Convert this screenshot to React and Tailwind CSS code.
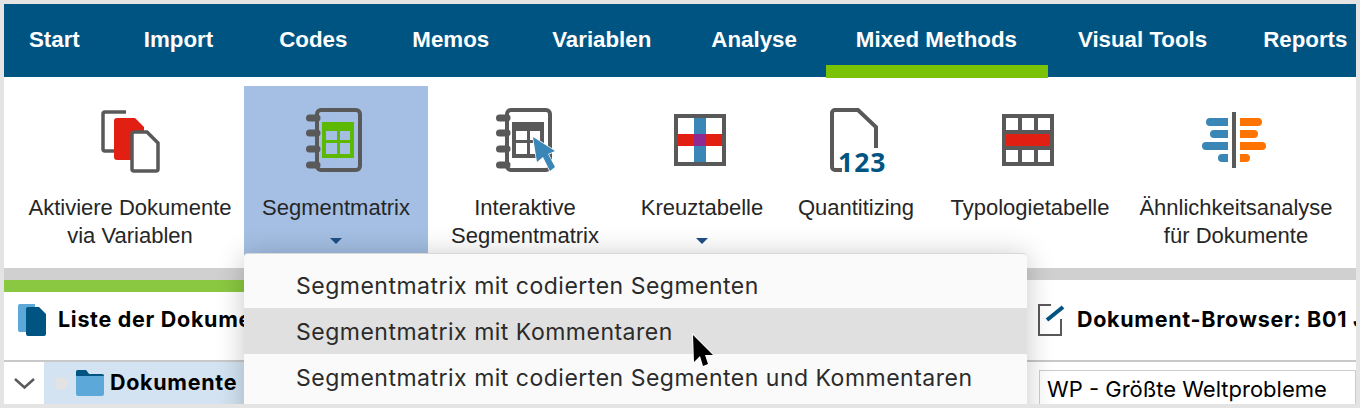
import React from "react";

const tabs = [
  { name: "Start", ml: "ml-0" },
  { name: "Import", ml: "ml-[64px]" },
  { name: "Codes", ml: "ml-[66px]" },
  { name: "Memos", ml: "ml-[65px]" },
  { name: "Variablen", ml: "ml-[63px]" },
  { name: "Analyse", ml: "ml-[60px]" },
  { name: "Mixed Methods", ml: "ml-[59px]" },
  { name: "Visual Tools", ml: "ml-[61px]" },
  { name: "Reports", ml: "ml-[56px]" },
];

const gray = "#595959";
const blue = "#3a87b7";
const red = "#e21f13";

const Notebook = ({ x, children }) => (
  <>
    <rect x={x} y="6" width="43" height="60" rx="4" fill="none" stroke={gray} strokeWidth="4" />
    {[14, 29, 45, 61].map((y) => (
      <line key={y} x1={x - 7.5} x2={x} y1={y} y2={y} stroke={gray} strokeWidth="7" strokeLinecap="round" />
    ))}
    {children}
  </>
);

const Grid = ({ x, color, cell }) => (
  <>
    <rect x={x} y="18" width="32" height="36" fill={color} />
    <rect x={x + 4} y="27" width="11" height="9" fill={cell} />
    <rect x={x + 18} y="27" width="10" height="9" fill={cell} />
    <rect x={x + 4} y="39" width="11" height="11" fill={cell} />
    <rect x={x + 18} y="39" width="10" height="11" fill={cell} />
  </>
);

const Icon = ({ children }) => (
  <svg width="72" height="72" viewBox="0 0 72 72" className="block shrink-0 overflow-visible">
    {children}
  </svg>
);

const ribbon = [
  {
    w: "w-[228px]",
    label: ["Aktiviere Dokumente", "via Variablen"],
    icon: (
      <Icon>
        <path d="M32 8H11a2 2 0 0 0-2 2v35a2 2 0 0 0 2 2h9" fill="none" stroke={gray} strokeWidth="3.5" />
        <path d="M23 14h18l9 9v33H23a3 3 0 0 1-3-3V17a3 3 0 0 1 3-3z" fill={red} />
        <path d="M40 28h13l11 11v26a2 2 0 0 1-2 2H40a2 2 0 0 1-2-2V30a2 2 0 0 1 2-2z" fill="#fff" stroke={gray} strokeWidth="3.5" />
      </Icon>
    ),
  },
  {
    w: "w-[184px]",
    active: true,
    arrow: true,
    label: ["Segmentmatrix"],
    icon: (
      <Icon>
        <Notebook x={17}>
          <Grid x={22} color="#5cb800" cell="#a4bfe3" />
        </Notebook>
      </Icon>
    ),
  },
  {
    w: "w-[194px]",
    label: ["Interaktive", "Segmentmatrix"],
    icon: (
      <Icon>
        <Notebook x={18}>
          <Grid x={23} color={gray} cell="#fff" />
        </Notebook>
        <path d="M44 33L66 47L59 50L66 63L61 67L54 53L48 58Z" fill={blue} stroke="#fff" strokeWidth="1.5" paintOrder="stroke" />
      </Icon>
    ),
  },
  {
    w: "w-[160px]",
    arrow: true,
    label: ["Kreuztabelle"],
    icon: (
      <Icon>
        <rect x="10" y="12" width="48" height="48" fill="#fff" stroke={gray} strokeWidth="4" />
        <rect x="28" y="14" width="12" height="44" fill={blue} />
        <rect x="12" y="30" width="44" height="12" fill={red} />
        <rect x="28" y="30" width="12" height="12" fill="#8e2a92" />
      </Icon>
    ),
  },
  {
    w: "w-[148px]",
    label: ["Quantitizing"],
    icon: (
      <Icon>
        <path d="M22 66H15a3 3 0 0 1-3-3V9a3 3 0 0 1 3-3H38L56 23V44" fill="none" stroke={gray} strokeWidth="4" />
        <text x="18" y="68" fill="#005482" fontSize="26.5" fontWeight="700" letterSpacing="1" fontFamily="'Noto Sans', sans-serif">
          123
        </text>
      </Icon>
    ),
  },
  {
    w: "w-[200px]",
    label: ["Typologietabelle"],
    icon: (
      <Icon>
        <rect x="8" y="10" width="52" height="52" fill={gray} />
        {[12, 28, 44].map((x) => (
          <React.Fragment key={x}>
            <rect x={x} y="14" width="12" height="12" fill="#fff" />
            <rect x={x} y="46" width="12" height="12" fill="#fff" />
          </React.Fragment>
        ))}
        <rect x="12" y="30" width="44" height="12" fill={red} />
      </Icon>
    ),
  },
  {
    w: "w-[212px]",
    label: ["Ähnlichkeitsanalyse", "für Dokumente"],
    icon: (
      <Icon>
        <rect x="32" y="8" width="4" height="56" fill={gray} />
        <path d="M28 14H10a4 4 0 0 0 0 8H28Z M28 26H14a4 4 0 0 0 0 8H28Z M28 38H6a4 4 0 0 0 0 8H28Z M28 50H22a4 4 0 0 0 0 8H28Z" fill={blue} />
        <path d="M40 14H58a4 4 0 0 1 0 8H40Z M40 26H54a4 4 0 0 1 0 8H40Z M40 38H62a4 4 0 0 1 0 8H40Z M40 50H46a4 4 0 0 1 0 8H40Z" fill="#ff7300" />
      </Icon>
    ),
  },
];

const menuItems = [
  "Segmentmatrix mit codierten Segmenten",
  "Segmentmatrix mit Kommentaren",
  "Segmentmatrix mit codierten Segmenten und Kommentaren",
];

export default function App() {
  return (
    <div className="h-[408px] w-[1360px] overflow-hidden bg-[#e4e4e4] p-1">
      <div className="relative flex h-[400px] flex-col overflow-hidden bg-white font-['Liberation_Sans',sans-serif]">
        {/* tabs */}
        <nav className="flex h-[73px] shrink-0 bg-[#005482] pl-[25px] text-[22.3px] font-bold text-white">
          {tabs.map((tab) => (
            <div key={tab.name} className={`relative flex items-center whitespace-nowrap ${tab.ml}`}>
              <span className="mb-[2px]">{tab.name}</span>
              {tab.name === "Mixed Methods" && (
                <div className="absolute -bottom-px -left-[30px] -right-[31px] h-[13px] bg-[#7ac206]" />
              )}
            </div>
          ))}
        </nav>

        {/* ribbon */}
        <div className="flex h-[191px] shrink-0 pl-[12px] pt-[9px] text-[22px] leading-[28px] text-[#262626]">
          {ribbon.map((item) => (
            <div
              key={item.label[0]}
              className={`flex flex-col items-center pt-[18px] ${item.w} ${item.active ? "bg-[#a4bfe3]" : ""}`}
            >
              {item.icon}
              <div className="mt-[18px] whitespace-nowrap text-center">
                {item.label.map((line) => (
                  <div key={line}>{line}</div>
                ))}
              </div>
              {item.arrow && (
                <svg width="12" height="6" viewBox="0 0 12 6" className="mt-[16px] block">
                  <path d="M0 0H12L6 6Z" fill="#1d4f86" />
                </svg>
              )}
            </div>
          ))}
        </div>

        {/* panels */}
        <div className="h-[12px] shrink-0 bg-[#d0d0d0]" />
        <div className="flex min-h-0 flex-1 font-['Inter',sans-serif] text-black">
          <div className="flex w-[1016px] shrink-0 flex-col">
            <div className="h-[12px] shrink-0 bg-[#8ac841]" />
            <div className="flex h-[70px] shrink-0 items-center gap-[12px] border-b-2 border-[#c8c8c8] pb-[12px] pl-[14px] text-[21.5px] font-bold tracking-[0.7px]">
              <svg width="28" height="32" viewBox="0 0 28 32" className="block shrink-0">
                <path d="M2 0H17V28H2a2 2 0 0 1-2-2V2a2 2 0 0 1 2-2z" fill="#5ba8d9" />
                <path d="M10 3H21L28 10V30a2 2 0 0 1-2 2H10a2 2 0 0 1-2-2V5a2 2 0 0 1 2-2z" fill="#005482" />
              </svg>
              <span className="mb-[2px]">Liste der Dokumente</span>
            </div>
            <div className="flex flex-1 items-center">
              <div className="flex w-[40px] justify-center">
                <svg width="21" height="11" viewBox="0 0 21 11" className="block">
                  <path d="M1 1L10.5 9.5L20 1" fill="none" stroke={gray} strokeWidth="2.5" />
                </svg>
              </div>
              <div className="flex h-full flex-1 items-center bg-[#d3e3f1] pl-[11px] text-[21.5px] font-bold tracking-[0.7px]">
                <div className="h-[13px] w-[13px] rounded-full bg-[#e3e3e3]" />
                <svg width="28" height="26" viewBox="0 0 28 26" className="ml-[8px] block">
                  <path d="M2 0H10L13 4H26a2 2 0 0 1 2 2V24a2 2 0 0 1-2 2H2a2 2 0 0 1-2-2V2a2 2 0 0 1 2-2z" fill="#5ba8d9" />
                  <path d="M2 0H10L13 4H26a2 2 0 0 1 2 2V6H0V2a2 2 0 0 1 2-2z" fill="#005482" />
                </svg>
                <span className="mb-[2px] ml-[6px]">Dokumente</span>
              </div>
            </div>
          </div>

          <div className="flex min-w-0 flex-1 flex-col">
            <div className="h-[12px] shrink-0 bg-white" />
            <div className="flex h-[70px] shrink-0 items-center gap-[13px] border-b-2 border-[#c8c8c8] pb-[12px] pl-[18px] text-[21.5px] font-bold tracking-[0.7px] whitespace-nowrap">
              <svg width="26" height="32" viewBox="0 0 26 32" className="block shrink-0">
                <path d="M13 1H1V31H23V15" fill="none" stroke={gray} strokeWidth="2" />
                <path d="M9 16L25 3" fill="none" stroke="#005482" strokeWidth="4" />
              </svg>
              <span className="mb-[2px]">Dokument-Browser: B01 Jan</span>
            </div>
            <div className="flex-1 pl-[19px] pt-[8px]">
              <div className="flex h-[60px] items-start border border-[#cccccc] pl-[7px] text-[22px] leading-[36px] whitespace-nowrap">
                WP - Größte Weltprobleme
              </div>
            </div>
          </div>
        </div>

        {/* dropdown */}
        <div className="absolute left-[240px] top-[249px] h-[200px] w-[783px] rounded-t-[4px] border-t border-[#d8d8d8] bg-[#fafafa] pt-[8px] font-['Inter',sans-serif] text-[23px] leading-[46px] tracking-[0.5px] text-[#2b2b2b] shadow-[0_2px_28px_rgba(0,0,0,0.22)]">
          {menuItems.map((item, i) => (
            <div key={item} className={`h-[46px] whitespace-nowrap pl-[52px] pt-px ${i === 1 ? "bg-[#e0e0e0]" : ""}`}>
              {item}
            </div>
          ))}
        </div>

        {/* mouse pointer */}
        <svg width="28" height="38" viewBox="0 0 28 38" className="absolute left-[686px] top-[328px] block">
          <path d="M3 3L4 30L10 24L13 34L18 32L15 23L23 23Z" fill="#000" stroke="#fff" strokeWidth="1.5" paintOrder="stroke" />
        </svg>
      </div>
    </div>
  );
}
